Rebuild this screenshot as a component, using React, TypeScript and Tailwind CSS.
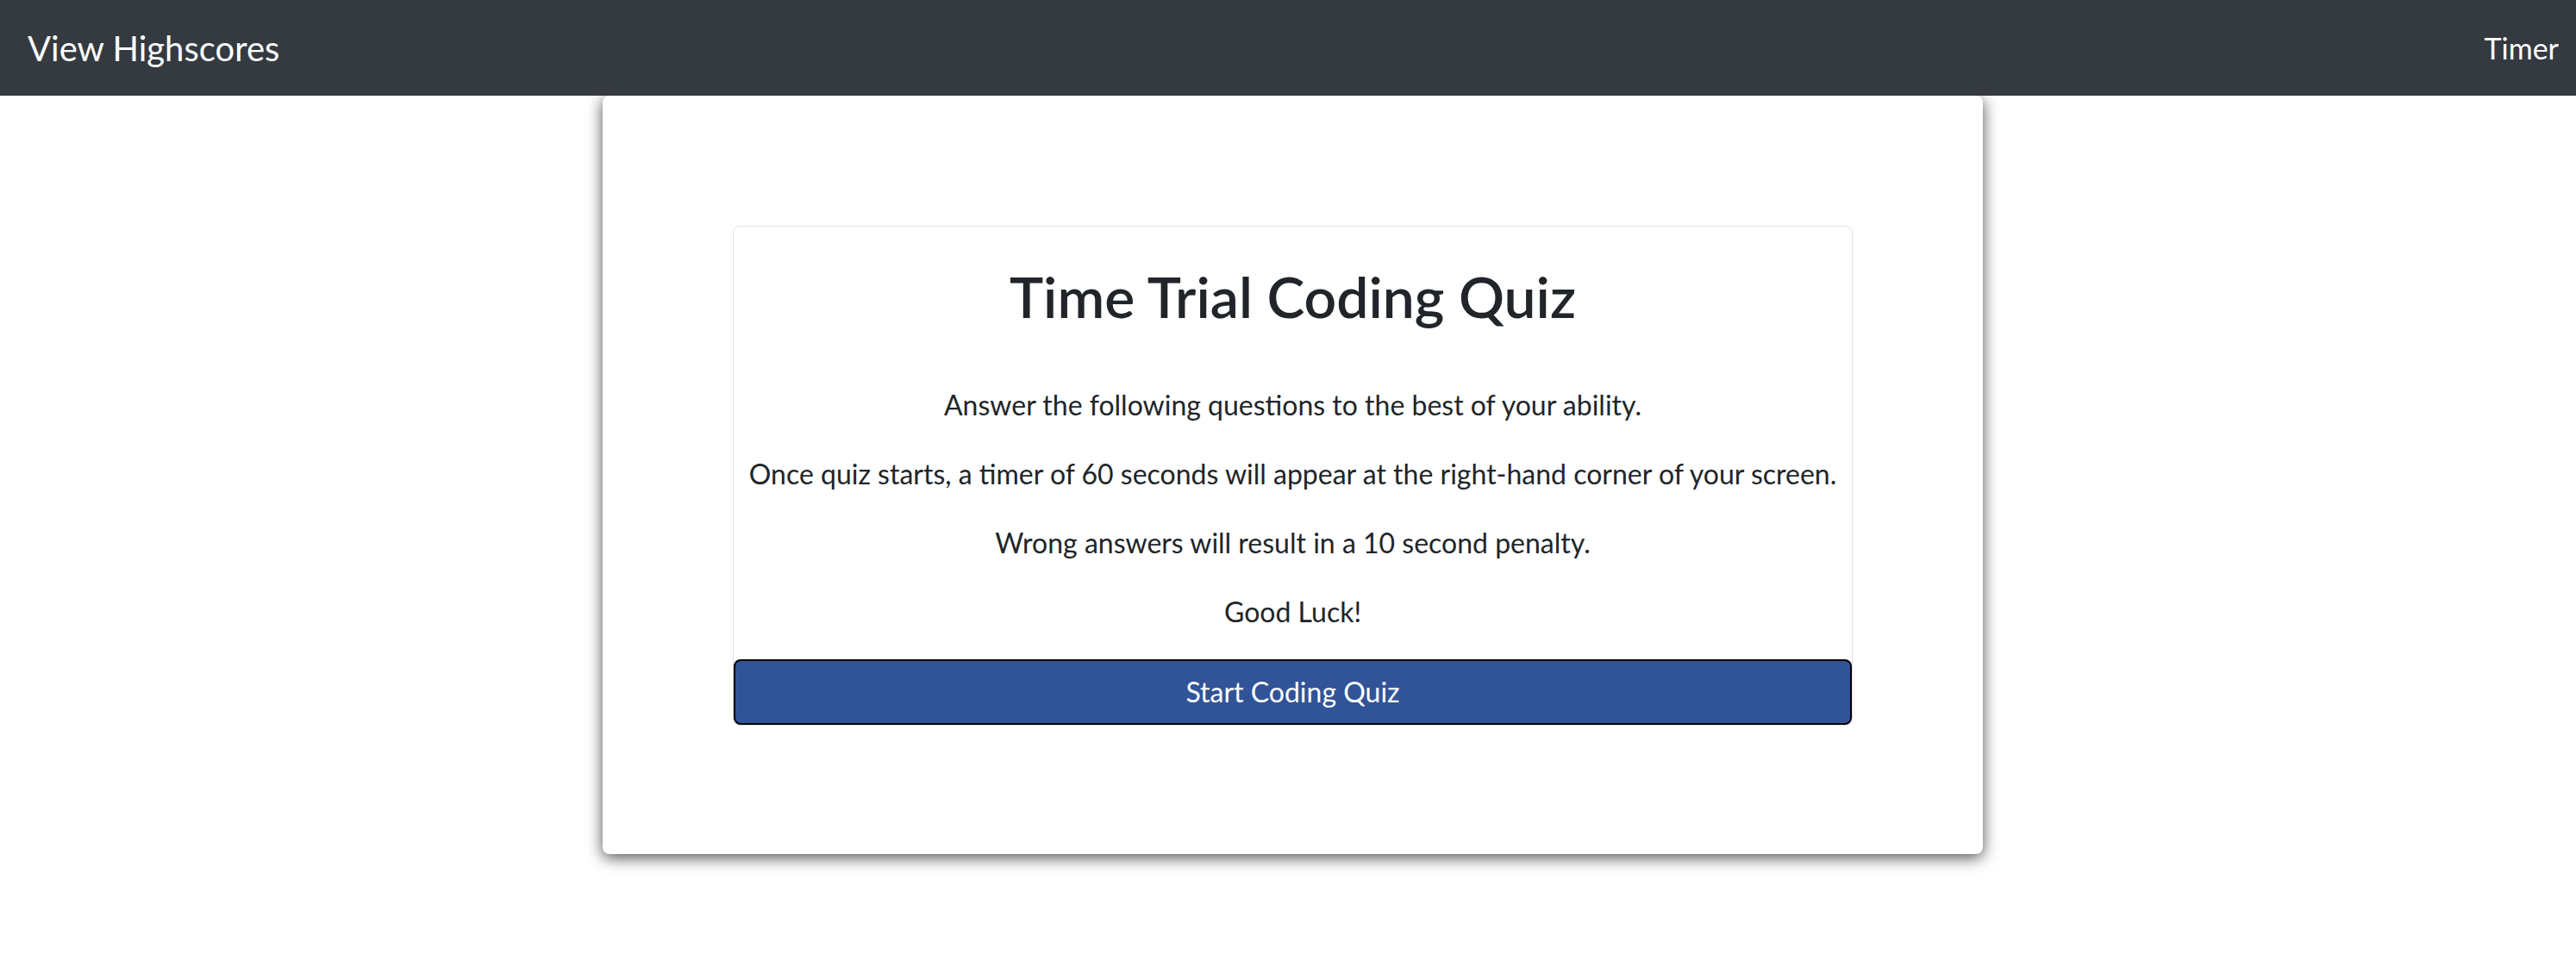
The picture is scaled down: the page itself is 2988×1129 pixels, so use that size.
import React from "react";

const lines = [
  "Answer the following questions to the best of your ability.",
  "Once quiz starts, a timer of 60 seconds will appear at the right-hand corner of your screen.",
  "Wrong answers will result in a 10 second penalty.",
  "Good Luck!",
];

const App = () => {
  return (
    <div className="min-h-screen w-full bg-white font-['Lato','Noto_Sans',sans-serif] text-[#212529]">
      <nav className="relative z-10 flex h-[111px] items-center justify-between bg-[#343a40] pl-[32px] pr-[20px] text-white">
        <span className="text-[40px] leading-none">View Highscores</span>
        <span className="text-[34px] leading-none">Timer</span>
      </nav>

      <div className="ml-[699px] h-[880px] w-[1601px] rounded-lg bg-white px-[151px] pt-[151px] shadow-[0_4px_18px_rgba(0,0,0,0.7)]">
        <div className="flex w-full flex-col items-center rounded-lg border border-[#dee2e6] text-center">
          <h1 className="mt-[42px] text-[66px] font-semibold leading-[77px]">
            Time Trial Coding Quiz
          </h1>
          <div className="mt-[64px] flex flex-col gap-[32px]">
            {lines.map((line, index) => (
              <p key={index} className="text-[32px] leading-[48px]">
                {line}
              </p>
            ))}
          </div>
          <button className="mt-[31px] h-[76px] w-full rounded-lg border-2 border-black bg-[#315499] text-[32px] text-white">
            Start Coding Quiz
          </button>
        </div>
      </div>
    </div>
  );
};

export default App;
